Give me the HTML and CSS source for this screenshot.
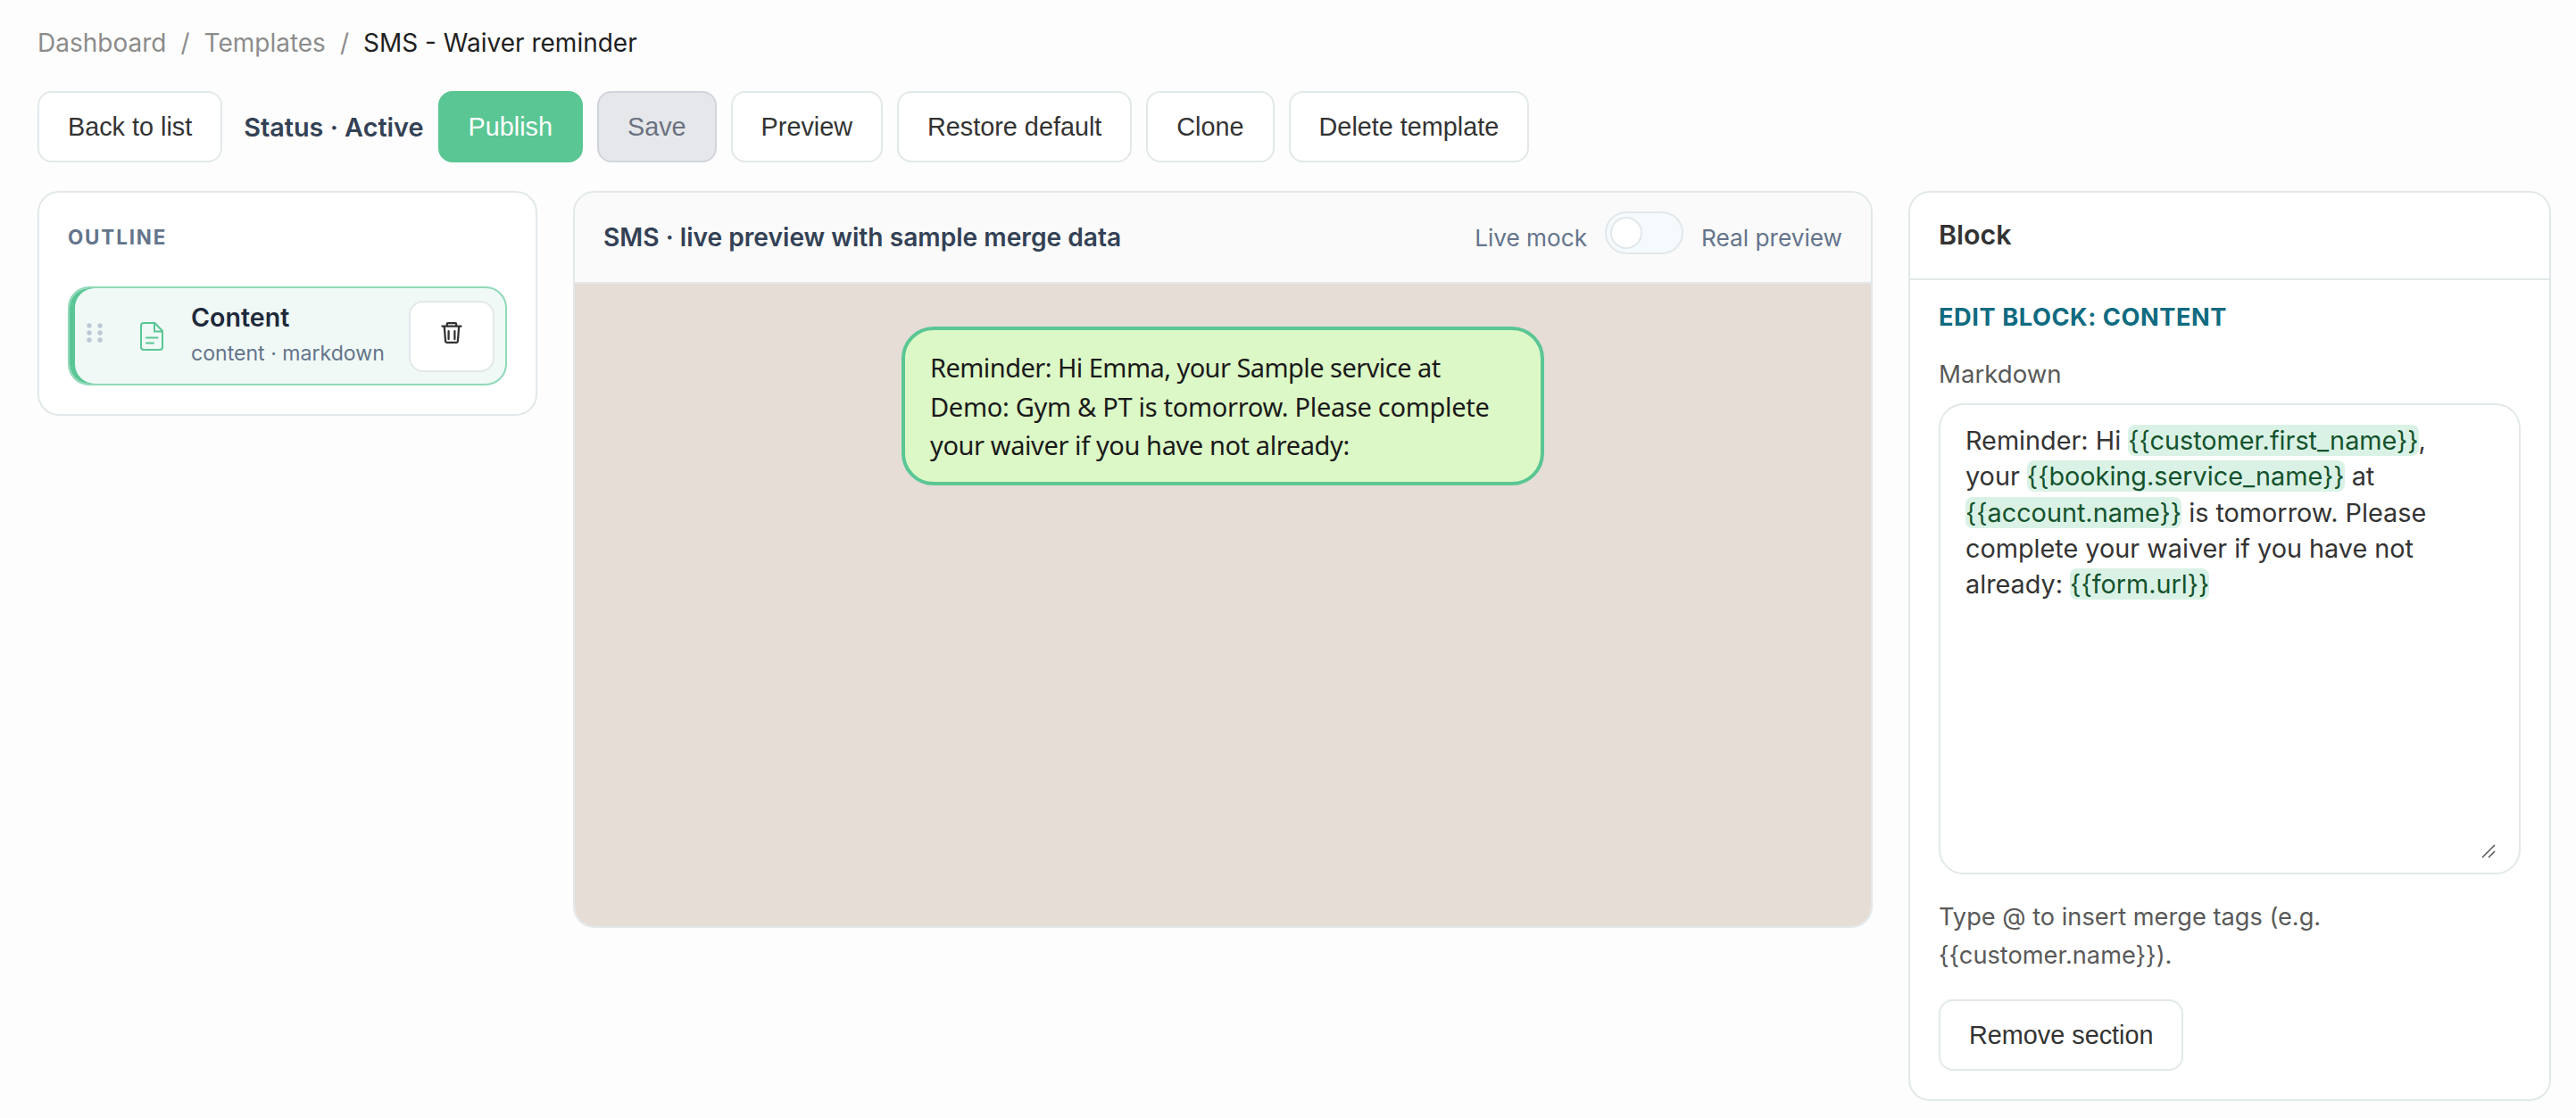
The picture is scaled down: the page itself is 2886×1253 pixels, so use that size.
FILE: index.html
```html
<!DOCTYPE html>
<html lang="en">
<head>
<meta charset="utf-8">
<title>SMS - Waiver reminder</title>
<link rel="stylesheet" href="styles.css">
</head>
<body>
<nav class="breadcrumb"><a>Dashboard</a><i>/</i><a>Templates</a><i>/</i><b>SMS - Waiver reminder</b></nav>
<div class="toolbar">
  <button class="btn">Back to list</button>
  <span class="status">Status · Active</span>
  <button class="btn primary">Publish</button>
  <button class="btn disabled">Save</button>
  <button class="btn">Preview</button>
  <button class="btn">Restore default</button>
  <button class="btn">Clone</button>
  <button class="btn">Delete template</button>
</div>
<main class="editor">
  <section class="card outline">
    <h2 class="outline-title">OUTLINE</h2>
    <div class="item">
      <svg class="grip" width="18" height="22" viewBox="0 0 18 22" fill="#bdc8d6"><circle cx="3" cy="3" r="2.7"/><circle cx="15" cy="3" r="2.7"/><circle cx="3" cy="11" r="2.7"/><circle cx="15" cy="11" r="2.7"/><circle cx="3" cy="19" r="2.7"/><circle cx="15" cy="19" r="2.7"/></svg>
      <svg class="doc" width="26" height="32" viewBox="0 0 26 32" fill="none" stroke="#5ac694" stroke-width="2" stroke-linecap="round" stroke-linejoin="round"><path d="M16.500 1H4a3 3 0 0 0-3 3v24a3 3 0 0 0 3 3h18a3 3 0 0 0 3-3V10z"/><path d="M16 1v9.500H25M7 17.500h12.500M7 23.500h8"/></svg>
      <div class="item-text">
        <div class="item-name">Content</div>
        <div class="item-sub">content · markdown</div>
      </div>
      <button class="btn trash" aria-label="Delete"><svg width="24" height="24" viewBox="0 0 24 24" fill="none" stroke="#333" stroke-width="2.300" stroke-linecap="round" stroke-linejoin="round"><path d="M1.500 4.700h21M6.800 4.500V2.200a1 1 0 0 1 1-1h8.400a1 1 0 0 1 1 1v2.300M3.800 5l1.300 16.200a1.800 1.800 0 0 0 1.800 1.600h10.200a1.800 1.800 0 0 0 1.800-1.600L20.200 5M8.600 10.200v8.800M15.400 10.200v8.800"/></svg></button>
    </div>
  </section>
  <section class="card preview">
    <header class="preview-head">
      <h2 class="preview-title">SMS · live preview with sample merge data</h2>
      <div class="mode"><span>Live mock</span><span class="toggle"><span class="knob"></span></span><span>Real preview</span></div>
    </header>
    <div class="phone">
      <div class="bubble"><span class="tight">Reminder: Hi Emma, your Sample service at</span><br><span class="loose">Demo: Gym &amp; PT is tomorrow. Please complete</span><br>your waiver if you have not already:</div>
    </div>
  </section>
  <section class="card block">
    <header class="block-head">Block</header>
    <div class="block-body">
      <h3 class="block-title">EDIT BLOCK: CONTENT</h3>
      <div class="label">Markdown</div>
      <div class="field">Reminder: Hi <mark>{{customer.first_name}}</mark>,<br>your <mark>{{booking.service_name}}</mark> at<br><mark>{{account.name}}</mark> is tomorrow. Please<br>complete your waiver if you have not<br>already: <mark>{{form.url}}</mark>
        <svg class="resize" width="16" height="16" viewBox="0 0 16 16" stroke="#555" stroke-width="1.500"><path d="M1 15 15 1M8 15l7-7"/></svg>
      </div>
      <p class="hint">Type @ to insert merge tags (e.g.<br>{{customer.name}}).</p>
      <button class="btn">Remove section</button>
    </div>
  </section>
</main>
</body>
</html>
```
FILE: styles.css
```css
* { box-sizing: border-box; }
body { margin: 0; padding: 26px 28px 19px 42px; background: #fdfdfd; font-family: Inter, "Liberation Sans", sans-serif; font-size: 28px; color: #333; }
h2, h3, p { margin: 0; }
.breadcrumb { display: flex; gap: 16px; height: 44px; line-height: 44px; color: #8c8c8c; margin-bottom: 32px; }
.breadcrumb i { font-style: normal; }
.breadcrumb b { font-weight: 400; color: #1f1f1f; }
.toolbar { display: flex; align-items: center; gap: 16px; margin-bottom: 32px; }
.btn { height: 80px; padding: 0 32px; border: 2px solid #e2e8ea; border-radius: 16px; background: #fff; color: #333; font: 28.8px "Liberation Sans", Arial, sans-serif; white-space: nowrap; }
.primary { background: #5ac694; border-color: #5ac694; color: #fff; }
.disabled { background: #e5e7eb; border-color: #d1d5db; color: #6b7280; }
.status { font-size: 28.8px; font-weight: 600; color: #334155; margin-left: 8px; }
.editor { display: grid; grid-template-columns: 560px 1456px 720px; gap: 40px; align-items: start; }
.card { background: #fff; border: 2px solid #e2e8ea; border-radius: 24px; }
.outline { padding: 32px; height: 252px; }
.outline-title { font-size: 22.4px; line-height: 36px; font-weight: 700; color: #64748b; letter-spacing: 1.85px; margin-bottom: 37px; }
.item { display: flex; align-items: center; height: 111px; padding: 0 12px 0 19px; border: 2px solid #8fd9b8; border-radius: 24px; background: #f0f9f6; box-shadow: inset 6px 0 0 #5ac694; }
.grip { margin-bottom: 7px; }
.doc { margin-left: 42px; }
.item-text { flex: 1; margin-left: 31px; margin-bottom: 4px; white-space: nowrap; }
.item-name { font-size: 28.6px; font-weight: 600; line-height: 42px; color: #1e293b; }
.item-sub { font-size: 23.1px; line-height: 38px; color: #64748b; }
.trash { width: 96px; padding: 0; display: flex; align-items: center; justify-content: center; }
.trash svg { margin-bottom: 8px; }
.preview { height: 826px; overflow: hidden; display: flex; flex-direction: column; }
.preview-head { height: 102px; padding: 0 32px; display: flex; align-items: center; justify-content: space-between; background: #fafafa; border-bottom: 2px solid #e2e8ea; }
.preview-title { font-size: 28.16px; font-weight: 600; color: #334155; }
.mode { display: flex; align-items: center; gap: 20px; font-size: 26.2px; color: #64748b; }
.toggle { width: 88px; height: 48px; padding: 4px; margin-bottom: 10px; border: 2px solid #e2e8ea; border-radius: 24px; background: #f5fbfc; }
.knob { display: block; width: 36px; height: 36px; border: 2px solid #e2e8ea; border-radius: 50%; background: #fff; }
.phone { flex: 1; background: #e5ddd6; padding-top: 48px; }
.bubble { width: 720px; height: 178px; margin: 0 auto; padding: 20px 28px; border: 4px solid #5ac694; border-radius: 36px; background: #dcf8c6; color: #1a1a1a; font: 29px/43.5px "Noto Sans", sans-serif; letter-spacing: -0.4px; white-space: nowrap; }
.tight { letter-spacing: -0.55px; }
.loose { letter-spacing: -0.3px; }
.block { height: 1020px; }
.block-head { height: 98px; padding: 0 32px; line-height: 95px; border-bottom: 2px solid #e2e8ea; font-size: 30.4px; font-weight: 600; }
.block-body { padding: 21px 32px 0; }
.block-title { font-size: 27.2px; line-height: 42px; font-weight: 700; letter-spacing: 0.56px; color: #0f6b80; }
.label { margin-top: 21px; line-height: 42px; margin-bottom: 12px; font-size: 27.6px; color: #595959; }
.field { position: relative; height: 528px; padding: 20px 28px; border: 2px solid #e2e8ea; border-radius: 28px; font-size: 28.8px; line-height: 40.3px; }
mark { background: #daf2e6; color: #14532d; border-radius: 8px; }
.resize { position: absolute; right: 26px; bottom: 16px; }
.hint { margin: 26px 0 28px; font-size: 27.2px; line-height: 43px; color: #595959; }
```
